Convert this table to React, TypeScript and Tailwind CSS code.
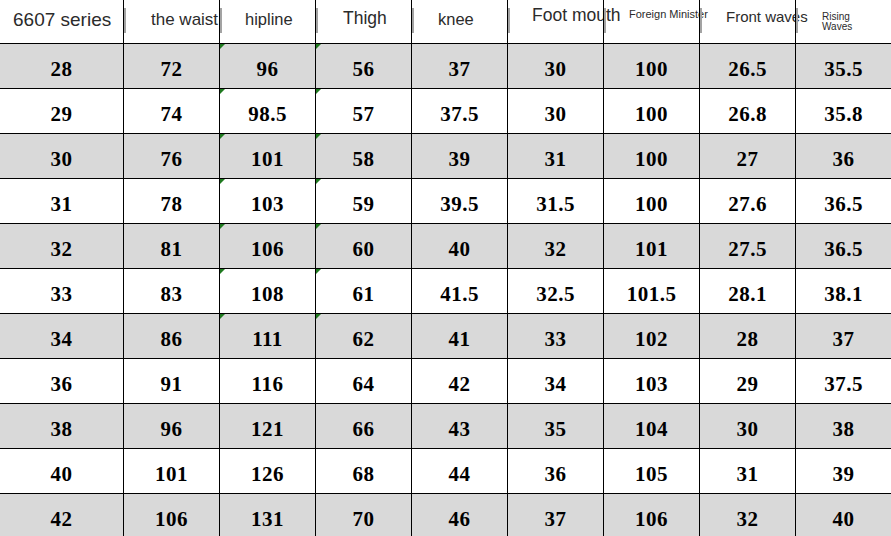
const headers: { label: string[]; cls: string }[] = [
  { label: ["6607 series"], cls: "pl-[13px] pt-[10px] text-[19px]" },
  { label: ["the waist"], cls: "pl-[27px] pt-[11px] text-[17px]" },
  { label: ["hipline"], cls: "pl-[25px] pt-[11px] text-[16.5px]" },
  { label: ["Thigh"], cls: "pl-[27px] pt-[10px] text-[17.5px]" },
  { label: ["knee"], cls: "pl-[26px] pt-[11px] text-[16.5px]" },
  { label: ["Foot mouth"], cls: "pl-[24px] pt-[7px] text-[17.5px]" },
  { label: ["Foreign Minister"], cls: "pl-[25px] pt-[9px] text-[11px]" },
  { label: ["Front waves"], cls: "pl-[26px] pt-[9px] text-[15px]" },
  { label: ["Rising", "Waves"], cls: "pl-[26px] pt-[12px] text-[10px]" },
];

const rows: string[][] = [
  ["28", "72", "96", "56", "37", "30", "100", "26.5", "35.5"],
  ["29", "74", "98.5", "57", "37.5", "30", "100", "26.8", "35.8"],
  ["30", "76", "101", "58", "39", "31", "100", "27", "36"],
  ["31", "78", "103", "59", "39.5", "31.5", "100", "27.6", "36.5"],
  ["32", "81", "106", "60", "40", "32", "101", "27.5", "36.5"],
  ["33", "83", "108", "61", "41.5", "32.5", "101.5", "28.1", "38.1"],
  ["34", "86", "111", "62", "41", "33", "102", "28", "37"],
  ["36", "91", "116", "64", "42", "34", "103", "29", "37.5"],
  ["38", "96", "121", "66", "43", "35", "104", "30", "38"],
  ["40", "101", "126", "68", "44", "36", "105", "31", "39"],
  ["42", "106", "131", "70", "46", "37", "106", "32", "40"],
];

export default function App() {
  return (
    <div className="w-[891px] h-[536px] overflow-hidden bg-white">
      {/* Header */}
      <div className="grid grid-cols-[123px_repeat(8,96px)] h-[43px] font-['Liberation_Sans',Arial,sans-serif] text-[#2b2b2b]">
        {headers.map((h, i) => (
          <div
            key={i}
            className={`relative flex flex-col items-start leading-none whitespace-nowrap ${
              i > 0 ? "border-l border-black" : ""
            } ${h.cls}`}
          >
            {i > 0 && <span className="absolute left-0 top-[8px] w-[2px] h-[25px] bg-[#a3a3a3]" />}
            {h.label.map((t) => (
              <span key={t} className={h.label.length > 1 ? "leading-[10px]" : ""}>
                {t}
              </span>
            ))}
          </div>
        ))}
      </div>

      {/* Body */}
      {rows.map((r, ri) => (
        <div
          key={ri}
          className={`grid grid-cols-[123px_repeat(8,96px)] h-[45px] border-t border-black ${
            ri % 2 === 0 ? "bg-[#d9d9d9]" : "bg-white"
          }`}
        >
          {r.map((v, ci) => (
            <div
              key={ci}
              className={`relative flex items-center justify-center pt-[6px] font-['Liberation_Serif',serif] font-bold text-[21px] leading-none tracking-[0.5px] text-black ${
                ci > 0 ? "border-l border-black" : ""
              }`}
            >
              {(ci === 2 || ci === 3) && ri < 7 && (
                <span className="absolute top-0 left-0 w-0 h-0 border-t-[5px] border-r-[5px] border-t-[#1f7a1f] border-r-transparent" />
              )}
              {v}
            </div>
          ))}
        </div>
      ))}
    </div>
  );
}
